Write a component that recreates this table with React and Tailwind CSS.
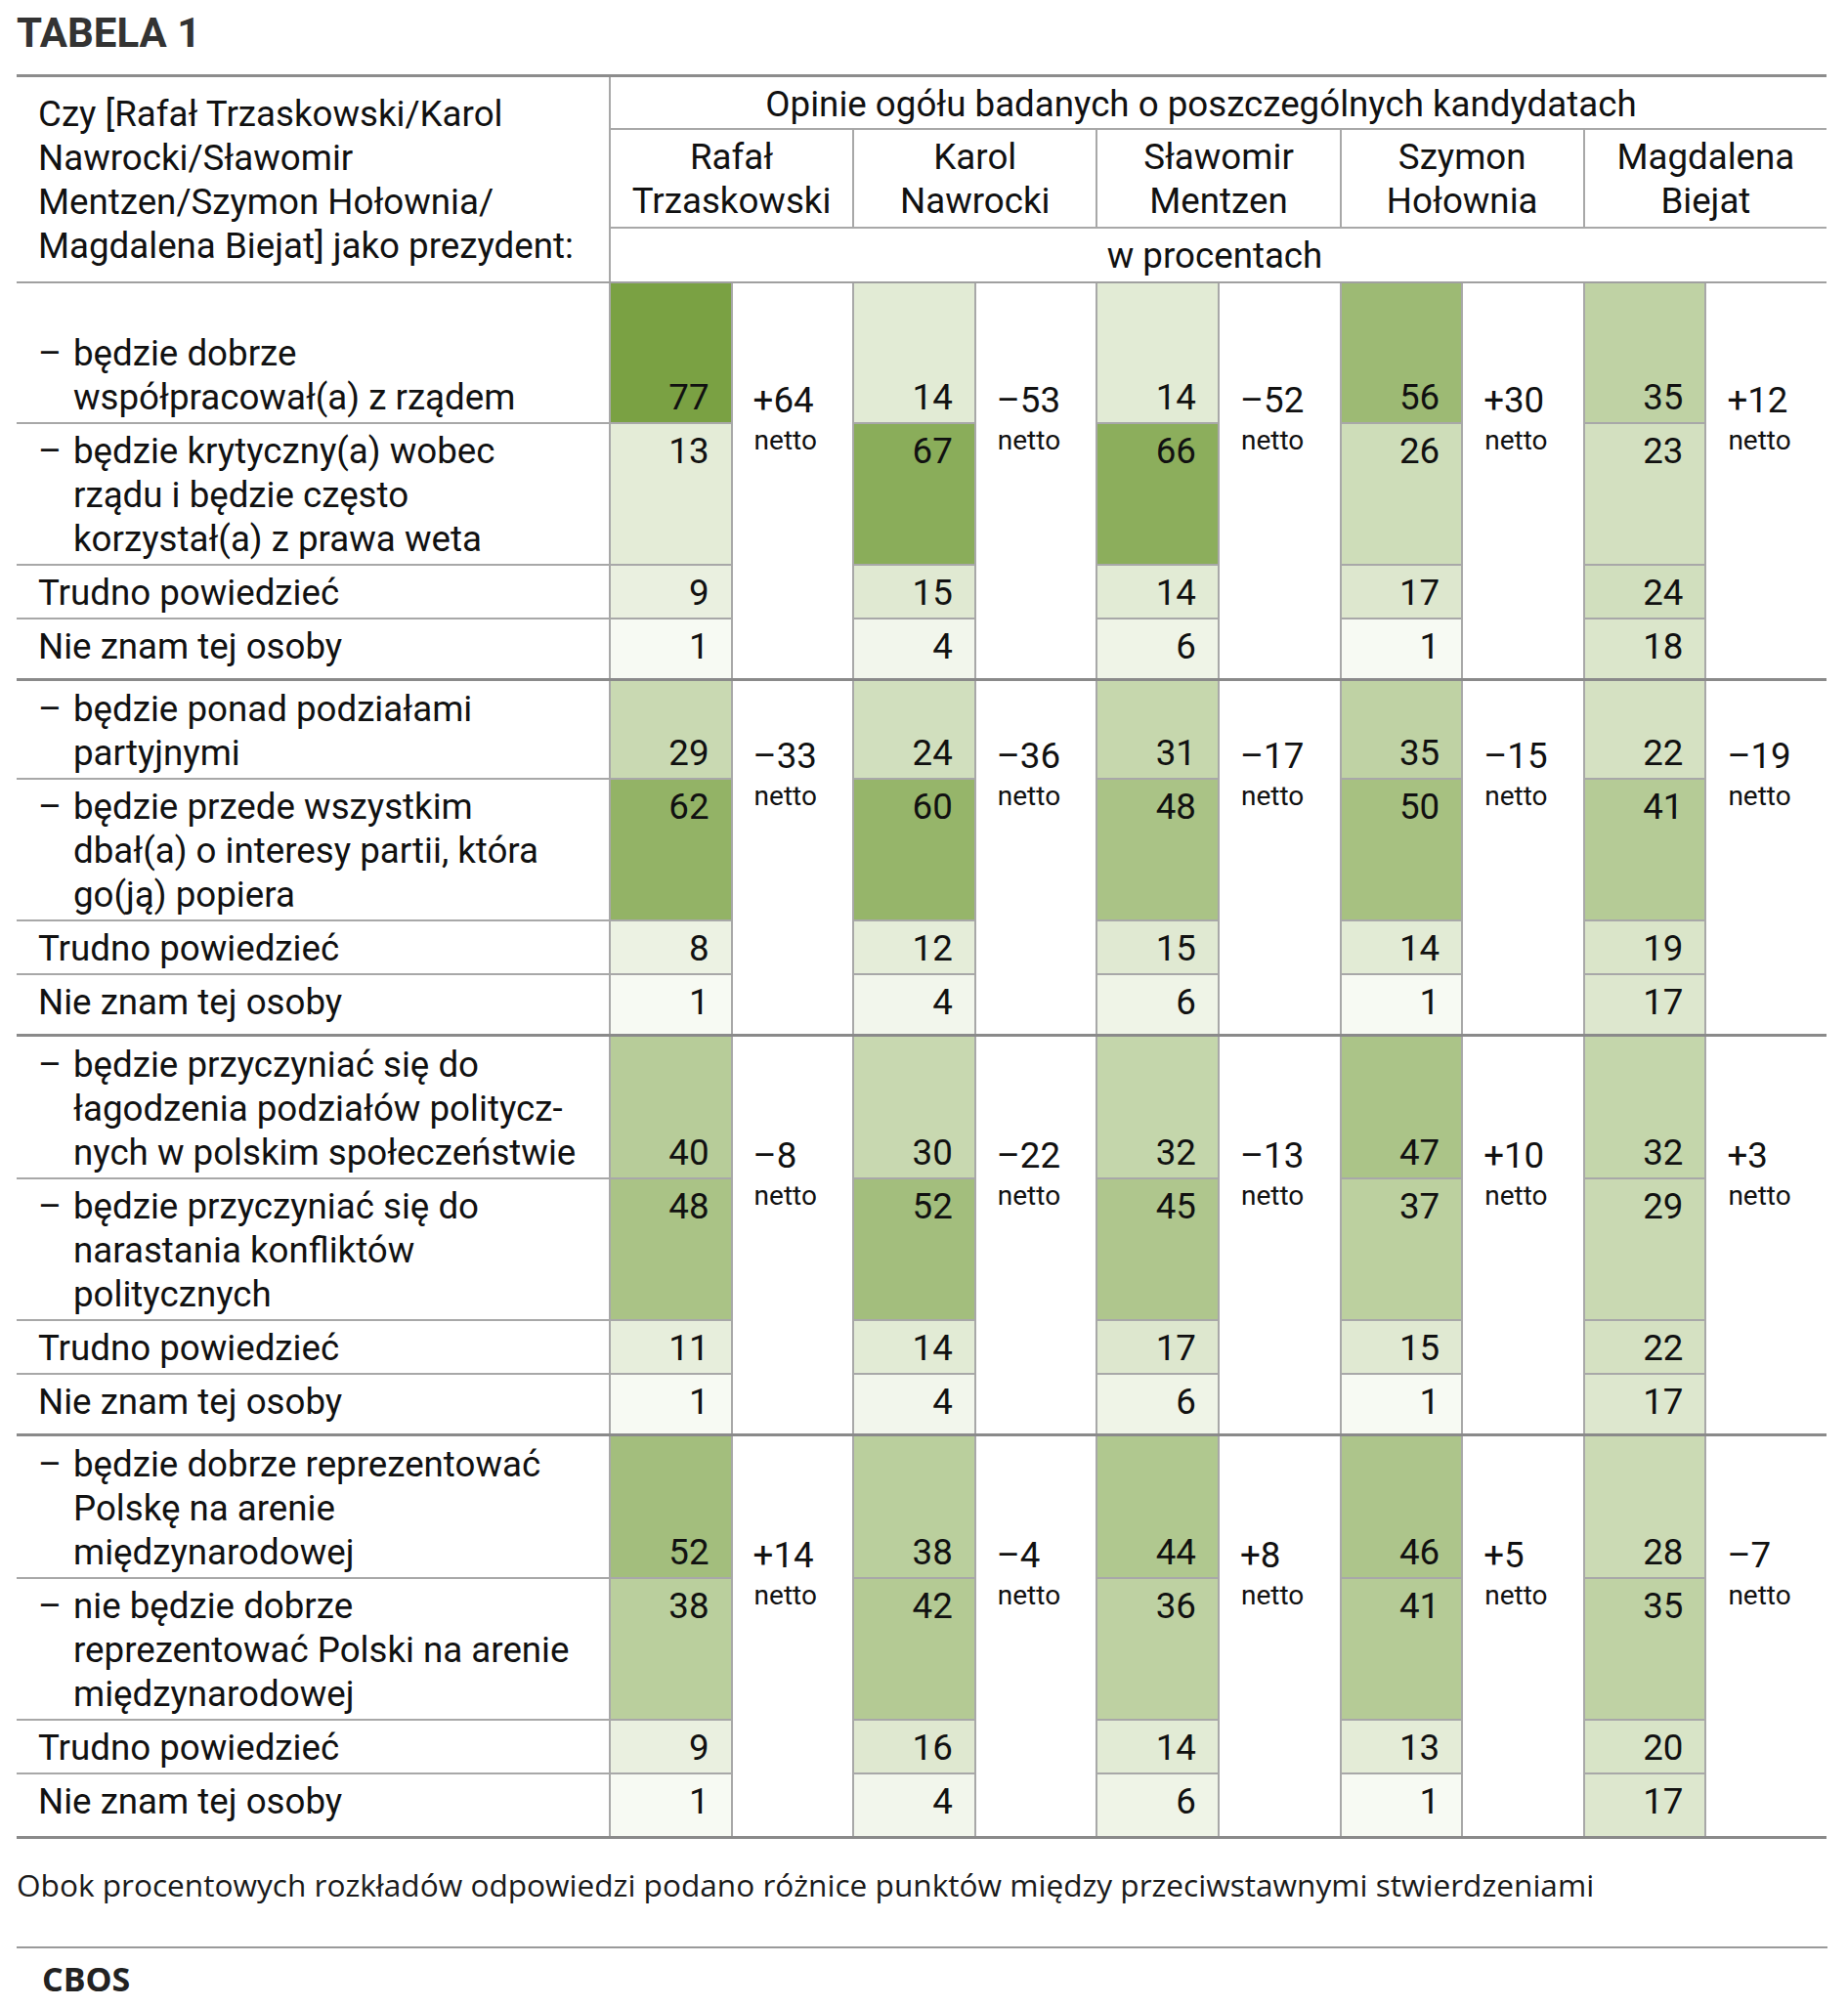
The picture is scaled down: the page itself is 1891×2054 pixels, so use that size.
import React from "react";

const candidates = [
  ["Rafał", "Trzaskowski"],
  ["Karol", "Nawrocki"],
  ["Sławomir", "Mentzen"],
  ["Szymon", "Hołownia"],
  ["Magdalena", "Biejat"],
];

// each section: two opposite statements, "trudno powiedzieć", "nie znam"
const sections = [
  {
    tall: true,
    netto: ["+64", "–53", "–52", "+30", "+12"],
    rows: [
      { dash: true, lines: ["będzie dobrze", "współpracował(a) z rządem"], values: [77, 14, 14, 56, 35] },
      { dash: true, lines: ["będzie krytyczny(a) wobec", "rządu i będzie często", "korzystał(a) z prawa weta"], values: [13, 67, 66, 26, 23] },
      { lines: ["Trudno powiedzieć"], values: [9, 15, 14, 17, 24] },
      { lines: ["Nie znam tej osoby"], values: [1, 4, 6, 1, 18] },
    ],
  },
  {
    netto: ["–33", "–36", "–17", "–15", "–19"],
    rows: [
      { dash: true, lines: ["będzie ponad podziałami", "partyjnymi"], values: [29, 24, 31, 35, 22] },
      { dash: true, lines: ["będzie przede wszystkim", "dbał(a) o interesy partii, która", "go(ją) popiera"], values: [62, 60, 48, 50, 41] },
      { lines: ["Trudno powiedzieć"], values: [8, 12, 15, 14, 19] },
      { lines: ["Nie znam tej osoby"], values: [1, 4, 6, 1, 17] },
    ],
  },
  {
    netto: ["–8", "–22", "–13", "+10", "+3"],
    rows: [
      { dash: true, lines: ["będzie przyczyniać się do", "łagodzenia podziałów politycz-", "nych w polskim społeczeństwie"], values: [40, 30, 32, 47, 32] },
      { dash: true, lines: ["będzie przyczyniać się do", "narastania konfliktów", "politycznych"], values: [48, 52, 45, 37, 29] },
      { lines: ["Trudno powiedzieć"], values: [11, 14, 17, 15, 22] },
      { lines: ["Nie znam tej osoby"], values: [1, 4, 6, 1, 17] },
    ],
  },
  {
    last: true,
    netto: ["+14", "–4", "+8", "+5", "–7"],
    rows: [
      { dash: true, lines: ["będzie dobrze reprezentować", "Polskę na arenie", "międzynarodowej"], values: [52, 38, 44, 46, 28] },
      { dash: true, lines: ["nie będzie dobrze", "reprezentować Polski na arenie", "międzynarodowej"], values: [38, 42, 36, 41, 35] },
      { lines: ["Trudno powiedzieć"], values: [9, 16, 14, 13, 20] },
      { lines: ["Nie znam tej osoby"], values: [1, 4, 6, 1, 17] },
    ],
  },
];

// shade of green taken from the percentage
function cellBg(v) {
  const t = Math.min(v / 77, 1);
  const from = [249, 251, 245];
  const to = [122, 161, 67];
  const c = from.map((f, i) => Math.round(f + (to[i] - f) * t));
  return `rgb(${c[0]}, ${c[1]}, ${c[2]})`;
}

const Lines = ({ lines }) =>
  lines.map((l, i) => (
    <React.Fragment key={i}>
      {i > 0 && <br />}
      {l}
    </React.Fragment>
  ));

const rowPad = ["pt-[6px] pb-[3px] border-b-2", "pt-[5px] pb-[3px] border-b-2", "pt-[5px] pb-[3px] border-b-2", "pt-[5px] pb-[10px]"];

function Section({ section }) {
  const pad = (i) => (i === 3 && section.last ? "pt-[5px] pb-[13px]" : rowPad[i]);
  return (
    <div className="grid grid-cols-[606px_repeat(10,minmax(0,1fr))] border-b-[3px] border-[#8a8a8a]">
      {section.rows.map((row, i) => (
        <React.Fragment key={i}>
          <div
            className={`flex flex-col pl-[22px] border-[#a8a8a8] whitespace-nowrap ${pad(i)} ${
              i === 0 ? "justify-end" : "justify-start"
            } ${i === 0 && section.tall ? "h-[144px]" : ""}`}
          >
            {row.dash ? (
              <div className="flex">
                <span className="w-[36px] shrink-0">–</span>
                <span>
                  <Lines lines={row.lines} />
                </span>
              </div>
            ) : (
              <span>{row.lines[0]}</span>
            )}
          </div>
          {row.values.map((v, j) => (
            <React.Fragment key={j}>
              <div
                className={`flex flex-col border-l-2 border-[#a8a8a8] pr-[22px] text-right ${pad(i)} ${
                  i === 0 ? "justify-end" : "justify-start"
                }`}
                style={{ backgroundColor: cellBg(v) }}
              >
                {v}
              </div>
              {i === 0 && (
                <div className="flex flex-col justify-end border-l-2 border-[#a8a8a8] pl-[21px] pb-[2px]">
                  {section.netto[j]}
                </div>
              )}
              {i === 1 && (
                <div className="border-l-2 border-[#a8a8a8] pl-[22px] pt-[1px] text-[28px] leading-[32px]">
                  netto
                </div>
              )}
              {i > 1 && <div className="border-l-2 border-[#a8a8a8]" />}
            </React.Fragment>
          ))}
        </React.Fragment>
      ))}
    </div>
  );
}

export default function App() {
  return (
    <div className="min-h-screen bg-white pl-[17px] pr-[22px] text-[#111] font-['Roboto',sans-serif]">
      <h1 className="pt-[9px] text-[42px] leading-[50px] font-bold text-[#333]">TABELA 1</h1>

      <div className="mt-[17px] w-[1852px] border-t-[3px] border-[#8c8c8c] text-[36.7px] leading-[45px]">
        <div className="grid grid-cols-[606px_repeat(10,minmax(0,1fr))] border-b-2 border-[#a0a0a0]">
          <div className="row-span-3 flex items-center pl-[22px] whitespace-nowrap">
            <span>
              Czy [Rafał Trzaskowski/Karol
              <br />
              Nawrocki/Sławomir
              <br />
              Mentzen/Szymon Hołownia/
              <br />
              Magdalena Biejat] jako prezydent:
            </span>
          </div>
          <div className="col-span-10 border-l-2 border-b-2 border-[#a8a8a8] pt-[5px] pb-[2px] pr-[36px] text-center">
            Opinie ogółu badanych o poszczególnych kandydatach
          </div>
          {candidates.map((c) => (
            <div key={c[1]} className="col-span-2 border-l-2 border-b-2 border-[#a8a8a8] pt-[5px] pb-[4px] text-center">
              {c[0]}
              <br />
              {c[1]}
            </div>
          ))}
          <div className="col-span-10 border-l-2 border-[#a8a8a8] pt-[5px] pb-[4px] pr-[8px] text-center">w procentach</div>
        </div>

        {sections.map((s, i) => (
          <Section key={i} section={s} />
        ))}
      </div>

      <p className="mt-[27px] text-[31.6px] leading-[40px] text-[#1a1a1a] font-['Open_Sans',sans-serif]">
        Obok procentowych rozkładów odpowiedzi podano różnice punktów między przeciwstawnymi stwierdzeniami
      </p>

      <div className="mt-[43px] w-[1853px] border-t-2 border-[#9a9a9a]" />

      <p className="mt-[10px] pl-[26px] text-[34px] leading-[42px] font-bold text-[#222] font-['Open_Sans',sans-serif]">
        CBOS
      </p>
    </div>
  );
}
